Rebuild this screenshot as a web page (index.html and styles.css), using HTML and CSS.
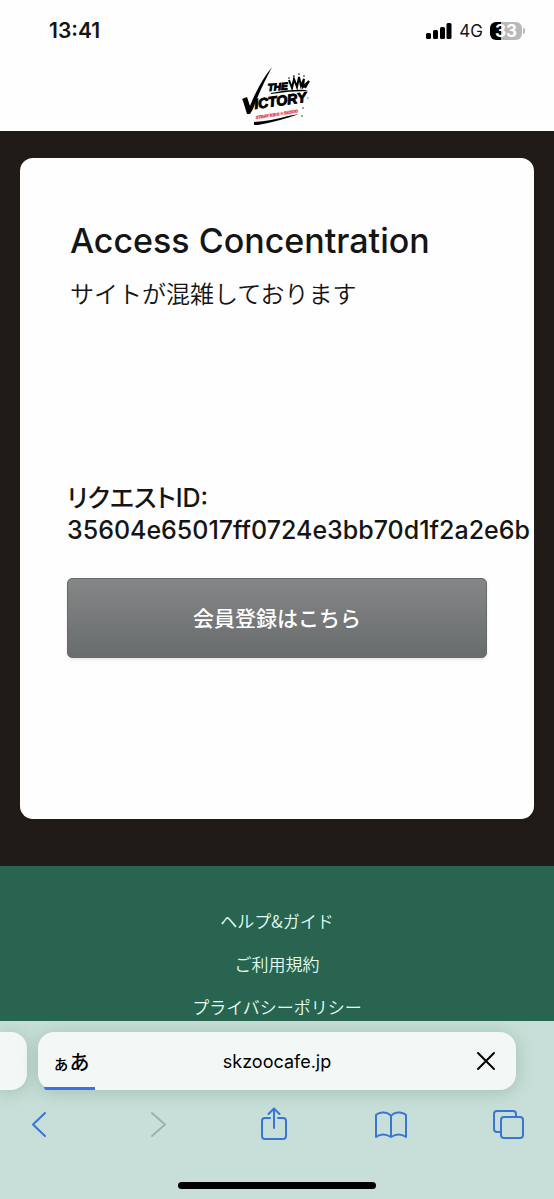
FILE: index.html
```html
<!DOCTYPE html>
<html lang="ja">
<head>
<meta charset="utf-8">
<meta name="viewport" content="width=device-width, initial-scale=1">
<title>Access Concentration</title>
<link rel="stylesheet" href="styles.css">
</head>
<body>
<header class="top">
  <div class="status">
    <span class="time">13:41</span>
    <div class="status-right">
      <svg class="signal" viewBox="0 0 26 16" aria-hidden="true">
        <rect x="0" y="10" width="5" height="6" rx="1.5"/><rect x="7" y="7" width="5" height="9" rx="1.5"/><rect x="14" y="4" width="5" height="12" rx="1.5"/><rect x="20.500" y="0" width="5" height="16" rx="1.500"/>
      </svg>
      <span class="network">4G</span>
      <span class="battery">33</span>
    </div>
  </div>
  <svg class="logo" viewBox="0 0 72 60" role="img" aria-label="The Victory">
    <path d="M31 1 L27 9 Q19 24 12 43 L9 48 L6 48 L2 35 L1 33 L6 31 L9 40 Q18 17 31 1Z"/>
    <text class="logo-main" x="14" y="43" transform="rotate(-8 14 43)">ICTORY</text>
    <text class="logo-the" x="27" y="25" transform="rotate(-4 27 25)">THE</text>
    <text class="logo-sub" x="15" y="53" transform="rotate(-9 15 53)">STRAY KIDS × SKZOO</text>
    <path class="logo-crown" d="M48 14 L51 22 L53 13 L56 21 L58 11 L60 20 L63 13 L62 21 L68 15 L64 22"/>
    <path d="M30 27 Q48 23 65 24 L66 25 Q48 25 30 28Z"/>
    <path d="M13 56 Q30 55 47 50 L58 48 Q39 55 17 59 L13 59Z"/>
    <g><circle cx="62" cy="42" r=".7"/><circle cx="61" cy="50" r=".7"/><circle cx="67" cy="32" r=".6"/><circle cx="48" cy="12" r=".8"/><circle cx="53" cy="10" r=".8"/><circle cx="58" cy="8" r=".8"/><circle cx="63" cy="10" r=".8"/></g>
  </svg>
</header>

<main class="stage">
  <section class="card">
    <div class="message">
      <h1 class="title">Access Concentration</h1>
      <p class="lead">サイトが混雑しております</p>
    </div>
    <p class="request">リクエストID:<br>35604e65017ff0724e3bb70d1f2a2e6b</p>
    <button class="register" type="button">会員登録はこちら</button>
  </section>
</main>

<footer class="footer">
  <a class="footer-link" href="#">ヘルプ&amp;ガイド</a>
  <a class="footer-link" href="#">ご利用規約</a>
  <a class="footer-link" href="#">プライバシーポリシー</a>
</footer>

<nav class="browser" aria-label="ブラウザ">
  <div class="tabs">
    <div class="tab-prev"></div>
    <div class="address">
      <button class="reader" type="button" aria-label="ページ設定"><span class="small-a">ぁ</span>あ</button>
      <span class="domain">skzoocafe.jp</span>
      <button class="stop" type="button" aria-label="読み込みを中止">
        <svg class="icon-close" viewBox="0 0 20 20"><path d="M2 2 L18 18 M18 2 L2 18"/></svg>
      </button>
      <span class="progress"></span>
    </div>
    <div class="tab-next"></div>
  </div>
  <div class="tools">
    <button class="tool" type="button" aria-label="戻る"><svg class="icon" viewBox="0 0 36 36"><path d="M25 7 L13 18.500 L25 30"/></svg></button>
    <button class="tool" type="button" aria-label="進む" disabled><svg class="icon" viewBox="0 0 36 36"><path d="M14 7 L27 18.500 L14 30"/></svg></button>
    <button class="tool" type="button" aria-label="共有"><svg class="icon" viewBox="0 0 36 36"><path d="M14 12 H9 Q6 12 6 15 V30 Q6 33 9 33 H27 Q30 33 30 30 V15 Q30 12 27 12 H22 M18 22 V3 M12.500 8 L18 2.500 L23.500 8"/></svg></button>
    <button class="tool" type="button" aria-label="ブックマーク"><svg class="icon" viewBox="0 0 36 36"><path d="M18 10 Q15 6 9 6.500 Q5 7 3 9 V31 Q10 26 18 31 Q26 26 33 31 V9 Q31 7 27 6.500 Q21 6 18 10 V31"/></svg></button>
    <button class="tool" type="button" aria-label="タブ"><svg class="icon" viewBox="0 0 36 36"><rect x="10" y="11" width="22" height="21" rx="3"/><path d="M10 26 H6 Q3 26 3 23 V8 Q3 5 6 5 H22 Q25 5 25 8 V11"/></svg></button>
  </div>
  <div class="home"></div>
</nav>
</body>
</html>
```

FILE: styles.css
```css
* { box-sizing: border-box; }

body {
  margin: 0;
  background: #28644f;
  color: #151515;
  font-family: Inter, "Noto Sans CJK JP", sans-serif;
}

button {
  padding: 0;
  border: 0;
  background: none;
  color: inherit;
  font: inherit;
}

.top {
  display: flex;
  flex-direction: column;
  align-items: center;
  padding-bottom: 5px;
  background: #fefefe;
}

.status {
  display: flex;
  align-items: center;
  justify-content: space-between;
  width: 100%;
  height: 66px;
  padding: 0 32px 5px 49px;
}

.time {
  font-size: 21px;
  font-weight: 600;
}

.status-right {
  display: flex;
  align-items: center;
  gap: 7px;
}

.signal { width: 26px; height: 16px; }

.network { font-size: 17px; }

.battery {
  position: relative;
  width: 32px;
  border-radius: 6px;
  background: linear-gradient(90deg, #000 33%, #b9b9b9 33%);
  color: #fff;
  font-size: 17px;
  font-weight: 700;
  line-height: 18px;
  text-align: center;
}

.battery::after {
  position: absolute;
  top: 6px;
  right: -3px;
  width: 2px;
  height: 6px;
  border-radius: 0 2px 2px 0;
  background: #b9b9b9;
  content: "";
}

.logo {
  width: 72px;
  height: 60px;
  font-family: "Liberation Sans", sans-serif;
  font-style: italic;
  font-weight: 700;
}

.logo-main { font-size: 14px; stroke: #000; stroke-width: 1px; }
.logo-the { font-size: 10px; stroke: #000; stroke-width: 1px; }
.logo-sub { fill: #df2933; font-size: 4px; stroke: #df2933; stroke-width: 1px; stroke-opacity: 0.4; }
.logo-crown { fill: none; stroke: #000; stroke-width: 2; }

.stage {
  padding: 27px 20px 47px;
  background: #211b18;
}

.card {
  min-height: 661px;
  padding: 60px 47px;
  border-radius: 13px;
  background: #fefefe;
}

.message {
  min-height: 264px;
  padding-left: 3px;
}

.title {
  margin: 0 0 12px;
  font-size: 34px;
  font-weight: 500;
  line-height: 45px;
  white-space: nowrap;
}

.lead {
  margin: 0;
  font-family: "Noto Sans CJK JP", sans-serif;
  font-size: 24px;
  font-weight: 350;
  line-height: 36px;
}

.request {
  margin: 0 0 32px;
  font-size: 25px;
  font-weight: 500;
  font-feature-settings: "palt";
  line-height: 32px;
  white-space: nowrap;
}

.register {
  width: 100%;
  height: 80px;
  padding-bottom: 3px;
  border: 1px solid #686b6b;
  border-radius: 5px;
  background: linear-gradient(#858687, #686c6c);
  box-shadow: 0 2px 3px #e9e9ec;
  color: #fff;
  font-size: 21px;
  font-weight: 500;
}

.footer {
  display: flex;
  flex-direction: column;
  align-items: center;
  padding: 33px 20px 170px;
}

.footer-link {
  color: #e2fff5;
  font-family: "Noto Sans CJK JP", sans-serif;
  font-size: 17px;
  font-weight: 350;
  line-height: 43px;
  text-decoration: none;
}

.browser {
  position: fixed;
  right: 0;
  bottom: 0;
  left: 0;
  padding: 11px 0 10px;
  overflow: hidden;
  background: #c7dfd8;
  color: #000;
}

.tabs {
  display: flex;
  gap: 11px;
  height: 58px;
}

.tab-prev,
.tab-next,
.address {
  background: #f3f8f6;
  box-shadow: 0 2px 18px #8fafa4aa;
}

.tab-prev {
  width: 27px;
  border-radius: 0 16px 16px 0;
}

.tab-next {
  width: 27px;
  visibility: hidden;
}

.address {
  position: relative;
  display: grid;
  flex: 1;
  grid-template-columns: 60px 1fr 60px;
  align-items: center;
  border-radius: 16px;
}

.reader {
  padding-left: 6px;
  font-size: 20px;
  font-weight: 500;
}

.small-a { font-size: 17px; }

.domain {
  font-size: 18px;
  text-align: center;
}

.stop {
  display: grid;
  place-items: center;
  height: 44px;
}

.icon-close {
  width: 20px;
  height: 20px;
  fill: none;
  stroke: #000;
  stroke-width: 2;
  stroke-linecap: round;
}

.progress {
  position: absolute;
  bottom: 0;
  left: 6px;
  width: 51px;
  height: 3px;
  border-radius: 0 0 0 3px;
  background: #3c73e0;
}

.tools {
  display: flex;
  justify-content: space-between;
  padding: 15px 27px 0 20px;
}

.tool {
  width: 36px;
  height: 38px;
  color: #3976d4;
}

.tool:disabled { color: #9eb2ac; }

.icon {
  display: block;
  width: 36px;
  height: 36px;
  fill: none;
  stroke: currentColor;
  stroke-width: 2;
  stroke-linecap: round;
  stroke-linejoin: round;
}

.home {
  width: 198px;
  height: 7px;
  margin: 39px auto 0;
  border-radius: 4px;
  background: #000;
}
```
